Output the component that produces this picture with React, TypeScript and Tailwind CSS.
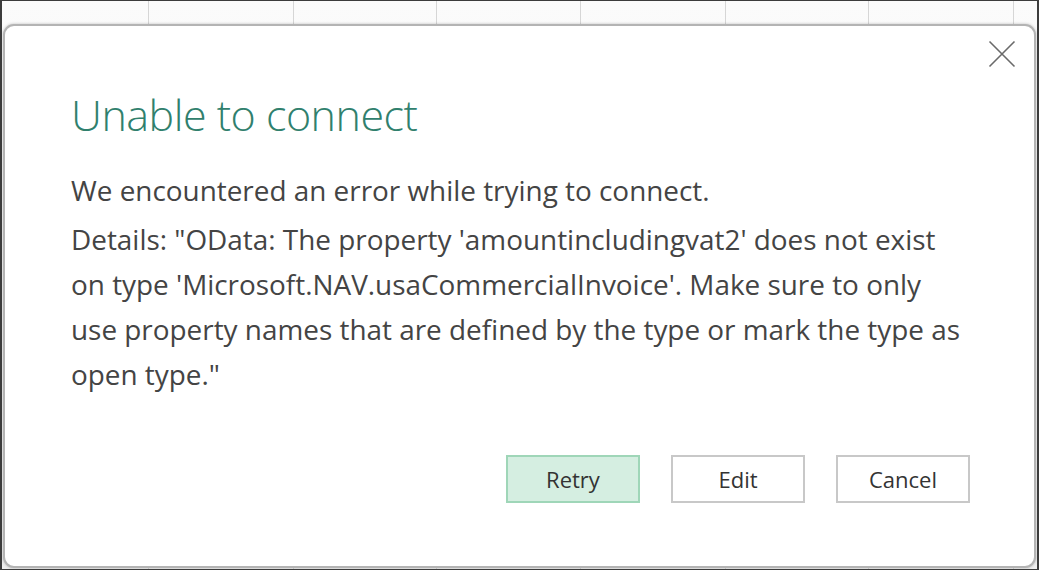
const columns = [147, 145, 143, 144, 145, 143, 145, 127]

export default function App() {
  return (
    <div
      className="relative h-[570px] w-[1039px] overflow-hidden border-y border-x-2 border-[#3c3c3c] bg-gradient-to-b from-[#fbfbfb] to-[#efefef]"
      style={{ fontFamily: '"Open Sans", "Noto Sans", sans-serif' }}
    >
      {/* spreadsheet grid behind the dialog */}
      <div className="flex h-full">
        {columns.map((w, i) => (
          <div key={i} className="h-full shrink-0 border-r border-[#d6d6d6]" style={{ width: w }} />
        ))}
      </div>

      <div className="absolute left-[1px] top-[23px] h-[544px] w-[1033px] rounded-[11px] border-2 border-[#b4b4b4] bg-white shadow-[0_0_3px_rgba(0,0,0,0.25)]">
        <button className="absolute right-[18px] top-[14px]">
          <svg width="28" height="28" viewBox="0 0 28 28" fill="none" stroke="#6a6a6a" strokeWidth="1.6">
            <path d="M1.5 1.5L26.5 26.5M26.5 1.5L1.5 26.5" />
          </svg>
        </button>

        <div className="pl-[66px] pt-[61px]">
          <h1 className="text-[43px] font-light leading-[56px] tracking-[-0.5px] text-[#30806d]">
            Unable to connect
          </h1>

          <div className="mt-[25px] text-[27.9px] leading-[45px] text-[#444444]">
            <p className="mb-[4px]">We encountered an error while trying to connect.</p>
            <p className="whitespace-nowrap">
              Details: "OData: The property 'amountincludingvat2' does not exist
              <br />
              on type 'Microsoft.NAV.usaCommercialInvoice'. Make sure to only
              <br />
              use property names that are defined by the type or mark the type as
              <br />
              open type."
            </p>
          </div>

          <div className="mt-[58px] flex justify-end gap-[31px] pr-[64px]">
            <button className="h-[48px] w-[134px] border-2 border-[#9fd6b8] bg-[#d5eee1] text-[22px] text-[#333]">
              Retry
            </button>
            <button className="h-[48px] w-[134px] border-2 border-[#c8c8c8] bg-white text-[22px] text-[#333]">
              Edit
            </button>
            <button className="h-[48px] w-[134px] border-2 border-[#c8c8c8] bg-white text-[22px] text-[#333]">
              Cancel
            </button>
          </div>
        </div>
      </div>
    </div>
  )
}
